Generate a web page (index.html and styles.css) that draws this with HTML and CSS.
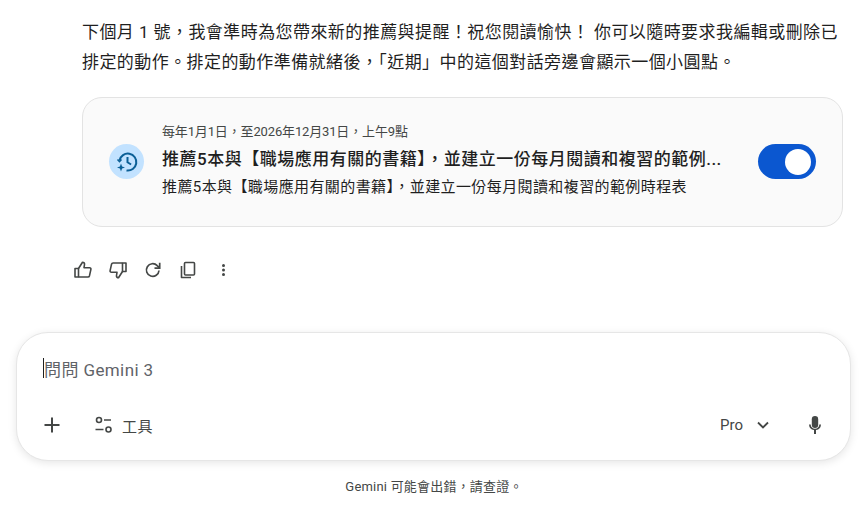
FILE: index.html
```html
<!DOCTYPE html>
<html lang="zh-Hant">
<head>
    <meta charset="UTF-8">
    <meta name="viewport" content="width=device-width, initial-scale=1.0">
    <title>Gemini</title>
    <link rel="stylesheet" href="styles.css">
</head>
<body>
    <main class="chat">
        <p class="reply">下個月 1 號，我會準時為您帶來新的推薦與提醒！祝您閱讀愉快！ 你可以隨時要求我編輯或刪除已排定的動作。排定的動作準備就緒後，「近期」中的這個對話旁邊會顯示一個小圓點。</p>

        <div class="card">
            <div class="card-icon">
                <svg width="24" height="24" viewBox="0 0 24 24" fill="none" stroke="#0b5f96" stroke-width="2">
                    <path d="M4.500 10.500A8.500 8.500 0 1 1 11.500 20.500"/>
                    <path d="M12.500 7v5.300l3.600 2.200"/>
                    <path d="M2.500 9.500l2 2 2-2" stroke-width="1.600"/>
                    <path d="M6 13.500l1.100 2.900 2.900 1.100-2.900 1.100L6 21.500l-1.100-2.900L2 17.500l2.900-1.100z" fill="#0b5f96" stroke="none"/>
                </svg>
            </div>
            <div class="card-text">
                <div class="card-date">每年1月1日，至2026年12月31日，上午9點</div>
                <div class="card-title">推薦5本與【職場應用有關的書籍】，並建立一份每月閱讀和複習的範例...</div>
                <div class="card-desc">推薦5本與【職場應用有關的書籍】，並建立一份每月閱讀和複習的範例時程表</div>
            </div>
            <div class="toggle"><span class="knob"></span></div>
        </div>

        <div class="actions">
            <button class="act">
                <svg width="20" height="20" viewBox="0 0 20 20" fill="none" stroke="#444746" stroke-width="1.600" stroke-linejoin="round"><path d="M2 8.500h3.500V17H2z"/><path d="M5.500 8.500l4-6.300c1.400 0 2.200 1 2 2.300L11 7.700h5.600c.9 0 1.500.8 1.300 1.700l-1.400 6.300c-.2.8-.8 1.300-1.600 1.300H5.500"/></svg>
            </button>
            <button class="act">
                <svg width="20" height="20" viewBox="0 0 20 20" fill="none" stroke="#444746" stroke-width="1.600" stroke-linejoin="round"><path d="M18 11.500h-3.500V3H18z"/><path d="M14.500 11.500l-4 6.300c-1.400 0-2.200-1-2-2.300l.5-3.200H3.400c-.9 0-1.500-.8-1.300-1.700l1.400-6.300C3.700 3.500 4.300 3 5.100 3h9.400"/></svg>
            </button>
            <button class="act">
                <svg width="20" height="20" viewBox="0 0 20 20" fill="none" stroke="#444746" stroke-width="1.700"><path d="M16 10.500A6.300 6.300 0 1 1 14.200 5.600L16.500 7.800"/><path d="M16.700 2.800v5.400h-5.200"/></svg>
            </button>
            <button class="act">
                <svg width="20" height="20" viewBox="0 0 20 20" fill="none" stroke="#444746" stroke-width="1.600" stroke-linejoin="round"><rect x="6.500" y="2.500" width="10" height="12.500" rx="1"/><path d="M3.500 6v11.500H13"/></svg>
            </button>
            <button class="act">
                <svg width="20" height="20" viewBox="0 0 20 20" fill="#444746"><circle cx="10.500" cy="5.500" r="1.500"/><circle cx="10.500" cy="10" r="1.500"/><circle cx="10.500" cy="14.500" r="1.500"/></svg>
            </button>
        </div>

        <div class="composer">
            <div class="prompt"><span class="caret"></span>問問 Gemini 3</div>
            <div class="toolbar">
                <svg class="plus" width="24" height="24" viewBox="0 0 24 24" fill="none" stroke="#444746" stroke-width="2"><path d="M12 4.500v15M4.500 12h15"/></svg>
                <div class="tools">
                    <svg width="20" height="20" viewBox="0 0 20 20" fill="none" stroke="#444746" stroke-width="1.600"><circle cx="5" cy="5" r="2.500"/><path d="M10 5h7M1.500 14.500h8"/><circle cx="14.500" cy="14.500" r="2.500"/></svg>
                    <span>工具</span>
                </div>
                <div class="model">
                    <span>Pro</span>
                    <svg width="16" height="16" viewBox="0 0 16 16" fill="none" stroke="#444746" stroke-width="1.800"><path d="M3 5.500l5 5 5-5"/></svg>
                </div>
                <svg class="mic" width="24" height="24" viewBox="0 0 24 24" fill="#444746"><rect x="8.800" y="3" width="6.400" height="12" rx="3.200"/><path d="M6 11.500h1.700a4.300 4.300 0 0 0 8.600 0H18a6 6 0 0 1-5 5.600V21h-2v-3.900a6 6 0 0 1-5-5.600z"/></svg>
            </div>
        </div>

        <div class="notice">Gemini 可能會出錯，請查證。</div>
    </main>
</body>
</html>
```

FILE: styles.css
```css
* {
    box-sizing: border-box;
}
body {
    margin: 0;
    height: 514px;
    overflow: hidden;
    background: #fff;
    color: #1f1f1f;
    font-family: Roboto, 'Noto Sans CJK TC', sans-serif;
}
.chat {
    display: flex;
    flex-direction: column;
    padding-top: 17px;
}
.reply {
    margin: 0 0 0 82px;
    width: 764px;
    font-size: 17px;
    line-height: 30px;
    letter-spacing: 0.43px;
}
.card {
    display: flex;
    align-items: center;
    width: 761px;
    height: 130px;
    margin: 20px 0 0 82px;
    padding: 0 26px 1px;
    background: #fafafa;
    border: 1px solid #e3e3e3;
    border-radius: 20px;
}
.card-icon {
    flex: none;
    display: flex;
    align-items: center;
    justify-content: center;
    width: 35px;
    height: 35px;
    border-radius: 50%;
    background: #c2e2ff;
}
.card-text {
    flex: none;
    width: 560px;
    margin-left: 18px;
    padding-bottom: 3px;
}
.card-date {
    font-size: 13px;
    line-height: 18px;
    letter-spacing: -0.15px;
    color: #444746;
}
.card-title {
    margin-top: 6px;
    font-size: 17px;
    line-height: 24px;
    font-weight: 500;
    letter-spacing: 0.5px;
    white-space: nowrap;
}
.card-desc {
    margin-top: 6px;
    font-size: 15px;
    line-height: 20px;
    letter-spacing: 0.4px;
    color: #1f1f1f;
    white-space: nowrap;
}
.toggle {
    flex: none;
    display: flex;
    align-items: center;
    justify-content: flex-end;
    width: 58px;
    height: 35px;
    margin-left: 36px;
    padding-right: 5px;
    border-radius: 18px;
    background: #0b57d0;
}
.knob {
    width: 26px;
    height: 26px;
    border-radius: 50%;
    background: #fff;
}
.actions {
    display: flex;
    gap: 15px;
    margin: 33px 0 0 73px;
}
.act {
    display: flex;
    padding: 0;
    border: none;
    background: none;
}
.composer {
    width: 835px;
    height: 129px;
    margin: 52px 0 0 16px;
    padding: 23px 26px 0;
    background: #fff;
    border: 1px solid #e6e6e6;
    border-radius: 32px;
    box-shadow: 0 2px 8px rgba(0, 0, 0, 0.1);
}
.prompt {
    display: flex;
    align-items: center;
    height: 24px;
    font-size: 17px;
    letter-spacing: 0.4px;
    color: #5f6368;
}
.caret {
    width: 1px;
    height: 20px;
    background: #1f1f1f;
}
.toolbar {
    display: flex;
    align-items: center;
    margin-top: 33px;
    color: #444746;
    font-size: 15px;
}
.plus {
    margin-left: -3px;
}
.tools {
    display: flex;
    align-items: center;
    gap: 8px;
    margin-left: 30px;
}
.tools span {
    letter-spacing: 0.5px;
}
.model {
    display: flex;
    align-items: center;
    gap: 12px;
    margin-left: auto;
    margin-right: 32px;
}
.mic {
    margin-right: -3px;
}
.notice {
    margin-top: 18px;
    text-align: center;
    font-size: 13px;
    line-height: 16px;
    letter-spacing: 0.2px;
    color: #444746;
}
```
